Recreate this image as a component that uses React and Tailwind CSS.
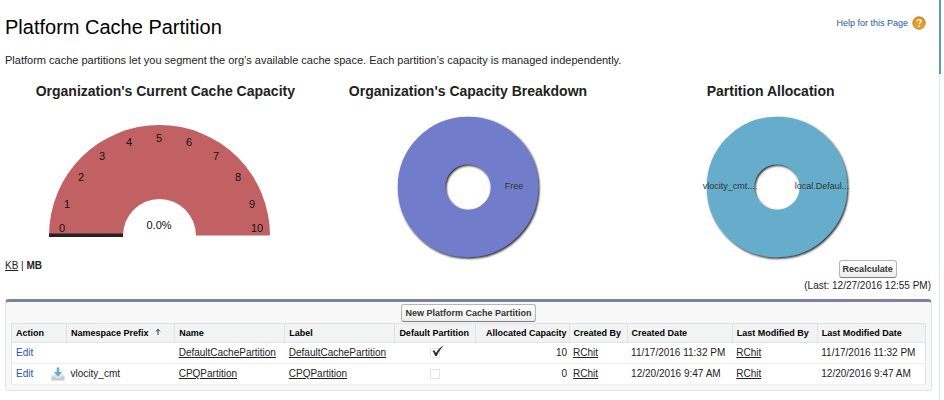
import React from 'react';

const gaugeTicks = [
  { label: '0', x: 57, y: 111 },
  { label: '1', x: 62, y: 87 },
  { label: '2', x: 76, y: 60 },
  { label: '3', x: 97, y: 39 },
  { label: '4', x: 124, y: 25 },
  { label: '5', x: 154, y: 21 },
  { label: '6', x: 184, y: 25 },
  { label: '7', x: 211, y: 39 },
  { label: '8', x: 233, y: 60 },
  { label: '9', x: 247, y: 87 },
  { label: '10', x: 252, y: 111 },
];

const partitions = [
  {
    namespace: '',
    name: 'DefaultCachePartition',
    isDefault: true,
    capacity: 10,
    user: 'RChit',
    date: '11/17/2016 11:32 PM',
  },
  {
    namespace: 'vlocity_cmt',
    name: 'CPQPartition',
    isDefault: false,
    capacity: 0,
    user: 'RChit',
    date: '12/20/2016 9:47 AM',
  },
];

function Gauge() {
  return (
    <svg width="308" height="150" viewBox="0 0 308 150" className="block" role="img" aria-label="Current cache capacity 0.0%">
      <path d="M44 118.500A110.500 110.500 0 0 1 265 118.500H191A36.500 36.500 0 0 0 118 118.500Z" fill="#c26163" />
      <rect x="44" y="116.500" width="74" height="3.500" fill="#222" />
      <g fontSize="11" textAnchor="middle" fill="#111">
        {gaugeTicks.map((t) => (
          <text key={t.label} x={t.x} y={t.y} dominantBaseline="central">
            {t.label}
          </text>
        ))}
        <text x="154" y="112">0.0%</text>
      </g>
    </svg>
  );
}

function Donut({ id, fill, title, labels }) {
  return (
    <svg width="308" height="150" viewBox="0 0 308 150" className="block overflow-visible" role="img" aria-label={title}>
      <defs>
        <filter id={id} filterUnits="userSpaceOnUse" x="70" y="-15" width="170" height="170">
          <feDropShadow dx="1" dy="1.300" stdDeviation="1.200" floodColor="#111" floodOpacity="1" />
        </filter>
      </defs>
      <circle cx="154" cy="70" r="46.500" fill="none" stroke={fill} strokeWidth="47.500" filter={`url(#${id})`} />
      <g fontSize="9" textAnchor="middle" fill="#333">
        {labels.map((l) => (
          <text key={l.text} x={l.x} y="72">
            {l.text}
          </text>
        ))}
      </g>
    </svg>
  );
}

function HelpIcon() {
  return (
    <svg width="14" height="14" viewBox="0 0 14 14" aria-hidden="true">
      <defs>
        <linearGradient id="helpFill" x1="0" y1="0" x2="0" y2="1">
          <stop offset="0" stopColor="#dd8f1c" />
          <stop offset="1" stopColor="#e9a73a" />
        </linearGradient>
      </defs>
      <circle cx="7" cy="7" r="6.200" fill="url(#helpFill)" stroke="#b8741a" strokeWidth="0.800" />
      <path d="M5 5.500C5 4.200 5.900 3.600 7 3.600S9.100 4.300 9.100 5.300C9.100 6.700 7.100 6.700 7.100 8.200" fill="none" stroke="#fff" strokeWidth="1.200" />
      <circle cx="7.100" cy="10.200" r="0.800" fill="#fff" />
    </svg>
  );
}

function InstalledIcon() {
  return (
    <svg width="14" height="14" viewBox="0 0 14 14" aria-hidden="true">
      <path d="M2.500 7L0.500 9.500V13.500H13.500V9.500L11.500 7Z" fill="#e6e6e6" />
      <path d="M0.500 9.500H4L5 11H9L10 9.500H13.500V13.500H0.500Z" fill="#c9cbce" />
      <path d="M5.700 0.500H8.300V5H11L7 9.700L3 5H5.700Z" fill="#62addf" />
    </svg>
  );
}

function Button({ children }) {
  return (
    <button
      type="button"
      className="h-[18px] whitespace-nowrap rounded-[3px] border border-[#b5b5b5] border-b-[#7f7f7f] bg-gradient-to-b from-white to-[#eeeeee] px-[3px] text-[9px] leading-[14px] font-bold text-[#333]"
    >
      {children}
    </button>
  );
}

function DefaultFlag({ checked, label }) {
  return (
    <span className="relative inline-block h-[10px] w-[10px] align-middle">
      <input
        type="checkbox"
        aria-label={label}
        checked={checked}
        readOnly
        className="block h-[10px] w-[10px] appearance-none border border-[#e4e4e4] bg-white"
      />
      {checked && (
        <svg width="14" height="14" viewBox="0 0 14 14" className="pointer-events-none absolute -top-[4px] left-[1px]" aria-hidden="true">
          <path d="M1.500 7L3.300 6.200L5 9C7 5.500 9.500 3 12.800 1.500C9.800 4.500 7.500 8 5.800 12H4.200C3.500 10 2.600 8.400 1.500 7Z" fill="#2b2b2b" />
        </svg>
      )}
    </span>
  );
}

const th = 'overflow-hidden border-r border-[#e0e3e5] pl-[4px] pr-[2px] text-left font-bold whitespace-nowrap';
const td = 'pl-[4px] pr-[2px] whitespace-nowrap';
const link = 'underline';

export default function App() {
  return (
    <div className="flex min-h-[400px] bg-white font-['Liberation_Sans',Arial,sans-serif] text-[#222]">
      <main className="min-w-0 flex-1 pb-[8px] pl-[5px]">
        <header className="flex items-start justify-between pt-[14px] pr-[13px]">
          <h1 className="text-[20px] leading-[26px] text-black">Platform Cache Partition</h1>
          <a href="#help" className="flex items-center gap-[4px] text-[9px] leading-[18px] text-[#1f57a5]">
            Help for this Page
            <HelpIcon />
          </a>
        </header>
        <p className="mt-[12px] text-[11px] leading-[16px]">
          Platform cache partitions let you segment the org’s available cache space. Each partition’s capacity is managed independently.
        </p>

        <section className="mt-[15px] grid grid-cols-3 pr-[8px]">
          <div className="flex flex-col items-center">
            <h2 className="mb-[18px] pl-[12px] text-[14px] leading-[16px] font-bold whitespace-nowrap">Organization's Current Cache Capacity</h2>
            <Gauge />
          </div>
          <div className="flex flex-col items-center">
            <h2 className="mb-[18px] text-[14px] leading-[16px] font-bold whitespace-nowrap">Organization's Capacity Breakdown</h2>
            <Donut id="freeShadow" fill="#717bca" title="Capacity breakdown" labels={[{ text: 'Free', x: 200 }]} />
          </div>
          <div className="flex flex-col items-center">
            <h2 className="mb-[18px] pr-[12px] text-[14px] leading-[16px] font-bold whitespace-nowrap">Partition Allocation</h2>
            <Donut
              id="allocShadow"
              fill="#65adcb"
              title="Partition allocation"
              labels={[
                { text: 'vlocity_cmt....', x: 107 },
                { text: 'local.Defaul...', x: 199 },
              ]}
            />
          </div>
        </section>

        <div className="-mt-[7px] flex items-start justify-between pr-[8px]">
          <div className="text-[10px] leading-[12px]">
            <a href="#kb" className={link}>KB</a> | <b>MB</b>
          </div>
          <div className="flex flex-col items-center gap-[1px]">
            <Button>Recalculate</Button>
            <span className="text-[10px] leading-[14px]">(Last: 12/27/2016 12:55 PM)</span>
          </div>
        </div>

        <section className="mt-[6px] mr-[7px] rounded-[4px] border border-t-[3px] border-[#e2e4e6] border-t-[#7b85a3] bg-[#f8f8f8] px-[5px] pb-[5px]">
          <div className="flex justify-center pt-[2px] pb-[1px]">
            <Button>New Platform Cache Partition</Button>
          </div>
          <table className="w-full table-fixed border-collapse border border-[#e0e3e5] bg-white text-[10px] leading-[12px]">
            <colgroup>
              <col className="w-[55px]" />
              <col className="w-[108px]" />
              <col className="w-[110px]" />
              <col className="w-[110px]" />
              <col className="w-[81px]" />
              <col className="w-[93px]" />
              <col className="w-[58px]" />
              <col className="w-[105px]" />
              <col className="w-[85px]" />
              <col className="w-[108px]" />
            </colgroup>
            <thead>
              <tr className="h-[19px] border-b border-[#e0e3e5] bg-[#f2f3f3] text-[9px] text-black">
                <th className={th}>Action</th>
                <th className={th}>
                  Namespace Prefix
                  <svg width="6" height="8" viewBox="0 0 6 8" className="ml-[6px] inline-block align-baseline" aria-hidden="true">
                    <path d="M3 7V1.500M1 3.500L3 1.200L5 3.500" fill="none" stroke="#333" strokeWidth="1" />
                  </svg>
                </th>
                <th className={th}>Name</th>
                <th className={th}>Label</th>
                <th className={th}>Default Partition</th>
                <th className="border-r border-[#e0e3e5] pr-[2px] text-right font-bold whitespace-nowrap">Allocated Capacity</th>
                <th className={th}>Created By</th>
                <th className={th}>Created Date</th>
                <th className={th}>Last Modified By</th>
                <th className={th}>Last Modified Date</th>
              </tr>
            </thead>
            <tbody>
              {partitions.map((p) => (
                <tr key={p.name} className="h-[21px] border-b border-[#ededed]">
                  <td className={td}>
                    <div className="flex items-center justify-between">
                      <a href="#edit" className="text-[#1f57a5]">Edit</a>
                      {p.namespace && <InstalledIcon />}
                    </div>
                  </td>
                  <td className={td}>{p.namespace}</td>
                  <td className={td}><a href="#name" className={link}>{p.name}</a></td>
                  <td className={td}><a href="#label" className={link}>{p.name}</a></td>
                  <td className="text-center leading-[10px]"><DefaultFlag checked={p.isDefault} label={`${p.name} is the default partition`} /></td>
                  <td className="pr-[2px] text-right">{p.capacity}</td>
                  <td className={td}><a href="#created-by" className={link}>{p.user}</a></td>
                  <td className={td}>{p.date}</td>
                  <td className={td}><a href="#modified-by" className={link}>{p.user}</a></td>
                  <td className={td}>{p.date}</td>
                </tr>
              ))}
            </tbody>
          </table>
        </section>
      </main>
      <div className="w-[5px] shrink-0 border-l border-[#d9ecf4]">
        <div className="-ml-px h-[74px] w-[2px] bg-[#5b9bb8]" />
      </div>
    </div>
  );
}
